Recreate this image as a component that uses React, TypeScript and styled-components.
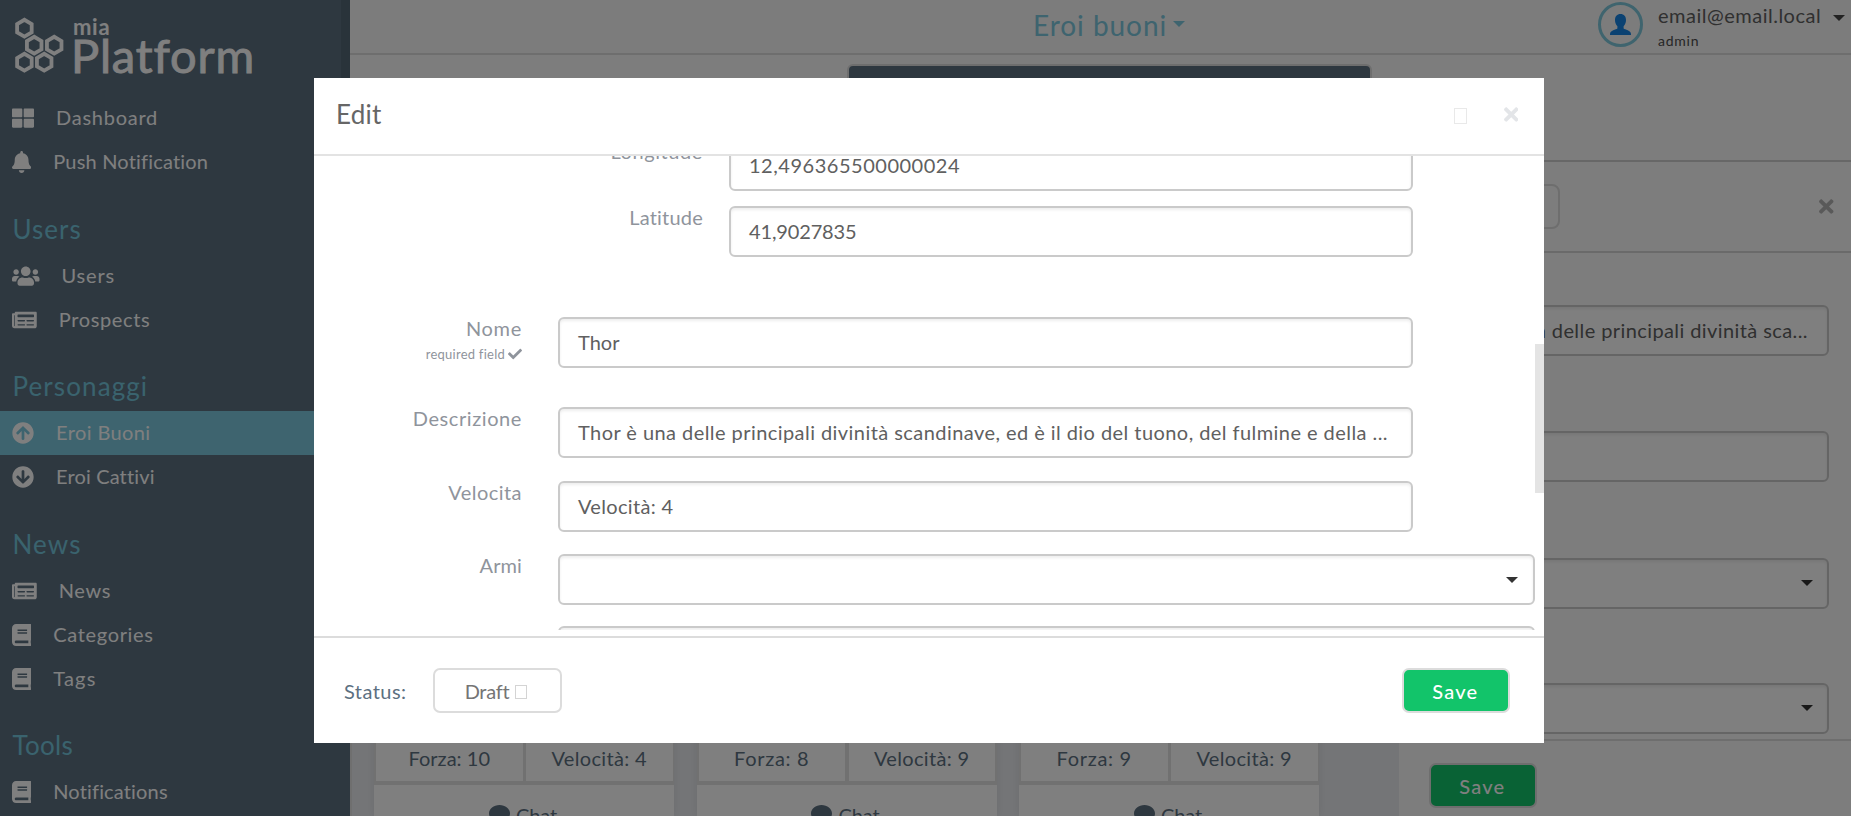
import React from "react";
import styled, { createGlobalStyle } from "styled-components";
import {
  FaArrowCircleDown,
  FaArrowCircleUp,
  FaBell,
  FaBook,
  FaCheck,
  FaNewspaper,
  FaThLarge,
  FaTimes,
  FaUsers,
} from "react-icons/fa";
import type { IconType } from "react-icons";

const GlobalStyle = createGlobalStyle`
  * { box-sizing: border-box; }
  body {
    margin: 0;
    overflow: hidden;
    font-family: Lato, "Liberation Sans", sans-serif;
    font-size: 20px;
  }
`;

const Page = styled.div`
  display: flex;
  width: 1851px;
  height: 816px;
  overflow: hidden;
  background: #fafafa;
`;

const Text = styled.span<{ $ls?: number }>`
  letter-spacing: ${(p) => p.$ls ?? 0.4}px;
  white-space: nowrap;
`;

/* ---------- Sidebar ---------- */

const Sidebar = styled.nav`
  flex: none;
  width: 350px;
  height: 816px;
  overflow: hidden;
  background: #5c7081;
  color: #fff;
`;

const Brand = styled.div`
  display: flex;
  height: 96px;
  padding: 17px 0 0 13.5px;
  gap: 6px;
  border-right: 9px solid #526675;
`;

const BrandText = styled.div`
  display: flex;
  flex-direction: column;
  padding-left: 2.5px;
`;

const BrandSmall = styled.span`
  height: 17px;
  font-size: 22px;
  font-weight: 700;
  line-height: 19px;
  letter-spacing: 0.7px;
`;

const BrandLarge = styled.span`
  height: 44px;
  margin-left: -2px;
  font-size: 47px;
  line-height: 42px;
  letter-spacing: 0.85px;
  -webkit-text-stroke: 0.9px #fff;
`;

const NavSection = styled.div`
  height: 69.5px;
  padding: 29.5px 0 0 12.5px;
  font-size: 26px;
  line-height: 30px;
  color: #74c6dc;
`;

const NavItem = styled.div<{ $active?: boolean; $icon: number }>`
  display: flex;
  align-items: center;
  height: 44px;
  padding-left: 12px;
  gap: 22px;
  line-height: 42px;
  background: ${(p) => (p.$active ? "#7cc8de" : "transparent")};
  svg { flex: none; height: 22px; width: ${(p) => p.$icon}px; }
  span { height: 44px; }
`;

type Item = { icon: IconType; iconWidth: number; label: string; ls: number; active?: boolean };
type Section = { title?: string; ls?: number; items: Item[] };

const sections: Section[] = [
  {
    items: [
      { icon: FaThLarge, iconWidth: 22, label: "Dashboard", ls: 0.75 },
      { icon: FaBell, iconWidth: 19.25, label: "Push Notification", ls: 0.19 },
    ],
  },
  {
    title: "Users",
    ls: 1.03,
    items: [
      { icon: FaUsers, iconWidth: 27.5, label: "Users", ls: 0.83 },
      { icon: FaNewspaper, iconWidth: 24.75, label: "Prospects", ls: 0.63 },
    ],
  },
  {
    title: "Personaggi",
    ls: 1.1,
    items: [
      { icon: FaArrowCircleUp, iconWidth: 22, label: "Eroi Buoni", ls: 0.4, active: true },
      { icon: FaArrowCircleDown, iconWidth: 22, label: "Eroi Cattivi", ls: 0.15 },
    ],
  },
  {
    title: "News",
    ls: 1.1,
    items: [
      { icon: FaNewspaper, iconWidth: 24.75, label: "News", ls: 0.65 },
      { icon: FaBook, iconWidth: 19.25, label: "Categories", ls: 0.66 },
      { icon: FaBook, iconWidth: 19.25, label: "Tags", ls: 1.2 },
    ],
  },
  {
    title: "Tools",
    ls: 0.3,
    items: [{ icon: FaBook, iconWidth: 19.25, label: "Notifications", ls: 0.16 }],
  },
];

const hexPoints = (cx: number, cy: number, r: number) =>
  [0, 1, 2, 3, 4, 5]
    .map((i) => {
      const a = (Math.PI / 3) * i + Math.PI / 6;
      return `${(cx + r * Math.cos(a)).toFixed(2)},${(cy + r * Math.sin(a)).toFixed(2)}`;
    })
    .join(" ");

const hexCenters = [
  [10.4, 11.2],
  [20.2, 28.2],
  [40.2, 28.2],
  [10.4, 45.2],
  [30.2, 45.2],
];

const HexLogo = () => (
  <svg width="51" height="57" viewBox="0 0 51 57" fill="none" stroke="#fff" strokeWidth="3.8">
    {hexCenters.map(([x, y]) => (
      <polygon key={`${x}-${y}`} points={hexPoints(x, y, 8.4)} />
    ))}
  </svg>
);

/* ---------- Main area ---------- */

const Main = styled.main`
  display: flex;
  flex: 1;
  flex-direction: column;
  min-width: 0;
`;

const TopBar = styled.header`
  display: flex;
  flex: none;
  height: 55px;
  padding-left: 683px;
  border-bottom: 2px solid #dcdcdc;
  background: #f8f8f8;
`;

const Title = styled.div`
  display: flex;
  width: 564px;
  height: 53px;
  gap: 6px;
  font-size: 28px;
  line-height: 50px;
  color: #7cc8de;
`;

const Caret = styled.i<{ $color: string; $top?: number }>`
  flex: none;
  width: 0;
  height: 0;
  margin-top: ${(p) => p.$top ?? 0}px;
  border: 6px solid transparent;
  border-top-color: ${(p) => p.$color};
  border-bottom: 0;
`;

const Avatar = styled.div`
  display: flex;
  align-items: center;
  justify-content: center;
  width: 45px;
  height: 45px;
  margin: 2px 15px 0 1px;
  border: 3px solid #7ec8dc;
  border-radius: 50%;
`;

const UserInfo = styled.div`
  display: flex;
  flex-direction: column;
  width: 175px;
  color: #606060;
  line-height: 30px;
`;

const UserRole = styled.span`
  margin-top: -4px;
  font-size: 14px;
  line-height: 29px;
  letter-spacing: 0.75px;
  color: #4c4c4c;
`;

const Toolbar = styled.div`
  flex: none;
  height: 107px;
  padding: 9px 0 0 498px;
  border-bottom: 2px solid #cfcfcf;
`;

const ToolbarTab = styled.div`
  width: 525px;
  height: 60px;
  margin-left: -1px;
  border: 2px solid #dcdcdc;
  border-radius: 6px;
  background: #5c7081;
`;

const Workspace = styled.div`
  display: flex;
  flex: 1;
  min-height: 0;
`;

const CardArea = styled.section`
  display: flex;
  align-items: flex-end;
  width: 1049px;
  gap: 22.5px;
  padding-left: 22px;
  border-left: 2px solid #dedede;
  background: #e9ebef;
  overflow: hidden;
`;

const Card = styled.article`
  flex: none;
  width: 300px;
  height: 120px;
  background: #fff;
  box-shadow: 0 0 9px rgba(0, 0, 0, 0.08);
`;

const Stats = styled.div`
  display: grid;
  grid-template-columns: 1fr 1fr;
  gap: 3.5px;
  height: 89px;
  padding: 0 1.5px 4px 2px;
  background: #e3e3e3;
`;

const Stat = styled.div`
  display: flex;
  justify-content: center;
  align-items: flex-end;
  background: #fff;
  color: #5c7081;
  line-height: 45px;
`;

const ChatLink = styled.div`
  display: flex;
  justify-content: center;
  gap: 6px;
  height: 31px;
  padding: 19px 2px 0 0;
  overflow: hidden;
  color: #5c7081;
  line-height: 24px;
  svg { flex: none; margin-top: 1px; }
  span { margin-top: -1px; }
`;

const cards = [
  { forza: "Forza: 10", fls: 0.03, velocita: "Velocità: 4" },
  { forza: "Forza: 8", fls: 0.69, velocita: "Velocità: 9" },
  { forza: "Forza: 9", fls: 0.69, velocita: "Velocità: 9" },
];

const Panel = styled.aside`
  display: flex;
  flex: 1;
  flex-direction: column;
  background: #fafafa;
`;

const CloseIcon = styled(FaTimes)`
  flex: none;
  width: 14.5px;
  height: 21px;
`;

const PanelHead = styled.div`
  display: flex;
  justify-content: space-between;
  flex: none;
  height: 91px;
  padding: 22px 17.5px 0 22px;
  border-bottom: 2px solid #d4d4d4;
  svg { margin-top: 12px; color: #b2b2b2; }
`;

const PanelButton = styled.div`
  width: 139px;
  height: 45px;
  border: 2px solid #dcdcdc;
  border-radius: 8px;
`;

const PanelBody = styled.div`
  display: flex;
  flex: none;
  flex-direction: column;
  height: 486px;
  padding: 52px 22px 0;
`;

const PanelFoot = styled.div`
  height: 77px;
  padding: 22px 30px;
  border-top: 2px solid #dcdcdc;
`;

/* ---------- Shared form controls ---------- */

const Field = styled.div<{ $width?: number; $gap?: number; $end?: boolean }>`
  display: flex;
  flex: none;
  justify-content: ${(p) => (p.$end ? "flex-end" : "flex-start")};
  width: ${(p) => (p.$width ? `${p.$width}px` : "auto")};
  height: 51px;
  margin-top: ${(p) => p.$gap ?? 0}px;
  padding: 0 ${(p) => (p.$end ? 19 : 18)}px;
  border: 2px solid #cacaca;
  border-radius: 6px;
  background: #fff;
  box-shadow: inset 0 2px 3px rgba(0, 0, 0, 0.07);
  color: #606060;
  line-height: 47px;
  overflow: hidden;
`;

const Select = styled(Field)<{ $inset?: number }>`
  justify-content: flex-end;
  padding-right: ${(p) => p.$inset ?? 15}px;
`;

const SaveButton = styled.button<{ $width: number }>`
  width: ${(p) => p.$width}px;
  height: 45px;
  padding: 0 1px 0 0;
  border: 2px solid #dcdcdc;
  border-radius: 7px;
  background: #12c46a;
  color: #fff;
  font: 500 20px/42px Lato, sans-serif;
  letter-spacing: 1.2px;
`;

/* ---------- Modal ---------- */

const Overlay = styled.div`
  position: fixed;
  inset: 0;
  background: rgba(0, 0, 0, 0.5);
`;

const Modal = styled.div`
  display: flex;
  flex-direction: column;
  width: 1230px;
  height: 665px;
  margin: 78px 0 0 314px;
  background: #fff;
`;

const ModalHead = styled.div`
  display: flex;
  flex: none;
  height: 78px;
  padding: 0 26px 0 22px;
  border-bottom: 2px solid #e3e3e3;
  color: #666;
  font-size: 26px;
  line-height: 73px;
`;

const ModalTitle = styled(Text)`
  flex: 1;
`;

const Tofu = styled.i<{ $w: number; $h: number; $color: string }>`
  flex: none;
  width: ${(p) => p.$w}px;
  height: ${(p) => p.$h}px;
  border: 1px solid ${(p) => p.$color};
`;

const HeadActions = styled.div`
  display: flex;
  gap: 37px;
  padding-top: 26px;
  color: #e3e5e8;
  i { margin-top: 4px; }
`;

const ModalBody = styled.div`
  display: flex;
  flex: none;
  height: 474px;
  margin-bottom: 6px;
  overflow: hidden;
`;

const FormRows = styled.div`
  display: flex;
  flex: 1;
  flex-direction: column;
  margin-top: -16px;
`;

const FormRow = styled.div<{ $gap: number; $label: number; $space: number }>`
  display: grid;
  flex: none;
  grid-template-columns: ${(p) => p.$label}px auto;
  column-gap: ${(p) => p.$space}px;
  justify-content: start;
  height: 51px;
  margin-top: ${(p) => p.$gap}px;
`;

const Label = styled.div`
  display: flex;
  flex-direction: column;
  align-items: flex-end;
  color: #8f949c;
  line-height: 22px;
`;

const Required = styled.span`
  display: flex;
  align-items: center;
  gap: 3px;
  height: 22px;
  margin-top: 4px;
  font-size: 13px;
  letter-spacing: 0.25px;
`;

const ScrollTrack = styled.div`
  width: 9px;
  padding-top: 188px;
`;

const ScrollThumb = styled.div`
  height: 149px;
  background: #e4e4e4;
`;

const ModalFoot = styled.div`
  display: flex;
  flex: 1;
  align-items: flex-start;
  padding: 30px 34px 0 30px;
  border-top: 2px solid #dcdcdc;
  color: #5c7081;
  line-height: 46px;
`;

const StatusSelect = styled.div`
  display: flex;
  justify-content: center;
  width: 129px;
  height: 45px;
  margin: 0 auto 0 27px;
  padding-right: 4px;
  gap: 6px;
  border: 2px solid #dcdcdc;
  border-radius: 7px;
  color: #757575;
  line-height: 43px;
  i { margin-top: 15px; }
`;

type Row = {
  label: string;
  lls: number;
  value?: string;
  vls?: number;
  gap: number;
  nested?: boolean;
  required?: boolean;
};

const rows: Row[] = [
  { label: "Longitude", lls: 0.58, value: "12,496365500000024", vls: 0.52, gap: 0, nested: true },
  { label: "Latitude", lls: 0.2, value: "41,9027835", vls: -0.15, gap: 15, nested: true },
  { label: "Nome", lls: 0.7, value: "Thor", vls: 0, gap: 60, required: true },
  {
    label: "Descrizione",
    lls: 0.58,
    value:
      "Thor è una delle principali divinità scandinave, ed è il dio del tuono, del fulmine e della ...",
    vls: 0.44,
    gap: 39,
  },
  { label: "Velocita", lls: 0.45, value: "Velocità: 4", vls: 0.33, gap: 23 },
  { label: "Armi", lls: 0.09, gap: 22 },
  { label: "", lls: 0, gap: 21 },
];

export default function App() {
  return (
    <>
      <GlobalStyle />
      <Page>
        <Sidebar>
          <Brand>
            <HexLogo />
            <BrandText>
              <BrandSmall>mia</BrandSmall>
              <BrandLarge>Platform</BrandLarge>
            </BrandText>
          </Brand>
          {sections.map((s, i) => (
            <React.Fragment key={i}>
              {s.title && (
                <NavSection>
                  <Text $ls={s.ls}>{s.title}</Text>
                </NavSection>
              )}
              {s.items.map(({ icon: Icon, iconWidth, label, ls, active }) => (
                <NavItem key={label} $active={active} $icon={iconWidth}>
                  <Icon />
                  <Text $ls={ls}>{label}</Text>
                </NavItem>
              ))}
            </React.Fragment>
          ))}
        </Sidebar>

        <Main>
          <TopBar>
            <Title>
              <Text $ls={0.95}>Eroi buoni</Text>
              <Caret $color="#7cc8de" $top={21} />
            </Title>
            <Avatar>
              <svg width="21" height="21" viewBox="0 0 21 21" fill="#1684e4">
                <path d="M10.5 0C14 0 16 2.4 16 6c0 2.700-1 4.800-2.400 6.200v2.300c1.200 1 7.400 2 7.400 5.500v1H0v-1c0-3.500 6.200-4.500 7.400-5.500v-2.300C6 10.800 5 8.700 5 6c0-3.600 2-6 5.500-6z" />
              </svg>
            </Avatar>
            <UserInfo>
              <Text $ls={0.5}>email@email.local</Text>
              <UserRole>admin</UserRole>
            </UserInfo>
            <Caret $color="#444" $top={15} />
          </TopBar>
          <Toolbar>
            <ToolbarTab />
          </Toolbar>
          <Workspace>
            <CardArea>
              {cards.map((c, i) => (
                <Card key={i}>
                  <Stats>
                    <Stat>
                      <Text $ls={c.fls}>{c.forza}</Text>
                    </Stat>
                    <Stat>
                      <Text $ls={0.33}>{c.velocita}</Text>
                    </Stat>
                  </Stats>
                  <ChatLink>
                    <svg width="21" height="18" viewBox="0 0 21 18" fill="#5c7081">
                      <path d="M10.500 0C16.300 0 21 3.800 21 8.500S16.300 17 10.500 17c-1.500 0-3-.300-4.300-.7C4.900 17.200 3 18 1 18c1-1.200 1.700-2.500 1.900-3.600C1.100 12.800 0 10.800 0 8.500 0 3.800 4.700 0 10.500 0z" />
                    </svg>
                    <Text $ls={-0.1}>Chat</Text>
                  </ChatLink>
                </Card>
              ))}
            </CardArea>
            <Panel>
              <PanelHead>
                <PanelButton />
                <CloseIcon />
              </PanelHead>
              <PanelBody>
                <Field $end>
                  <Text $ls={0.41}>Thor è una delle principali divinità sca...</Text>
                </Field>
                <Field $gap={75} />
                <Select $gap={76} $inset={14}>
                  <Caret $color="#333" $top={20} />
                </Select>
                <Select $gap={74} $inset={14}>
                  <Caret $color="#333" $top={20} />
                </Select>
              </PanelBody>
              <PanelFoot>
                <SaveButton $width={107.5}>Save</SaveButton>
              </PanelFoot>
            </Panel>
          </Workspace>
        </Main>
      </Page>

      <Overlay>
        <Modal>
          <ModalHead>
            <ModalTitle $ls={0.24}>Edit</ModalTitle>
            <HeadActions>
              <Tofu $w={13} $h={16} $color="#e9e9e9" />
              <CloseIcon />
            </HeadActions>
          </ModalHead>
          <ModalBody>
            <FormRows>
              {rows.map((r, i) => (
                <FormRow
                  key={i}
                  $gap={r.gap}
                  $label={r.nested ? 389 : 208}
                  $space={r.nested ? 26 : 36}
                >
                  <Label>
                    <Text $ls={r.lls}>{r.label}</Text>
                    {r.required && (
                      <Required>
                        required field <FaCheck size={14} />
                      </Required>
                    )}
                  </Label>
                  {r.value ? (
                    <Field $width={r.nested ? 684 : 855}>
                      <Text $ls={r.vls}>{r.value}</Text>
                    </Field>
                  ) : (
                    <Select $width={977}>
                      <Caret $color="#333" $top={21} />
                    </Select>
                  )}
                </FormRow>
              ))}
            </FormRows>
            <ScrollTrack>
              <ScrollThumb />
            </ScrollTrack>
          </ModalBody>
          <ModalFoot>
            <Text $ls={0.44}>Status:</Text>
            <StatusSelect>
              <Text $ls={-0.3}>Draft</Text>
              <Tofu $w={12} $h={14} $color="#d4d4d4" />
            </StatusSelect>
            <SaveButton $width={108.5}>Save</SaveButton>
          </ModalFoot>
        </Modal>
      </Overlay>
    </>
  );
}
